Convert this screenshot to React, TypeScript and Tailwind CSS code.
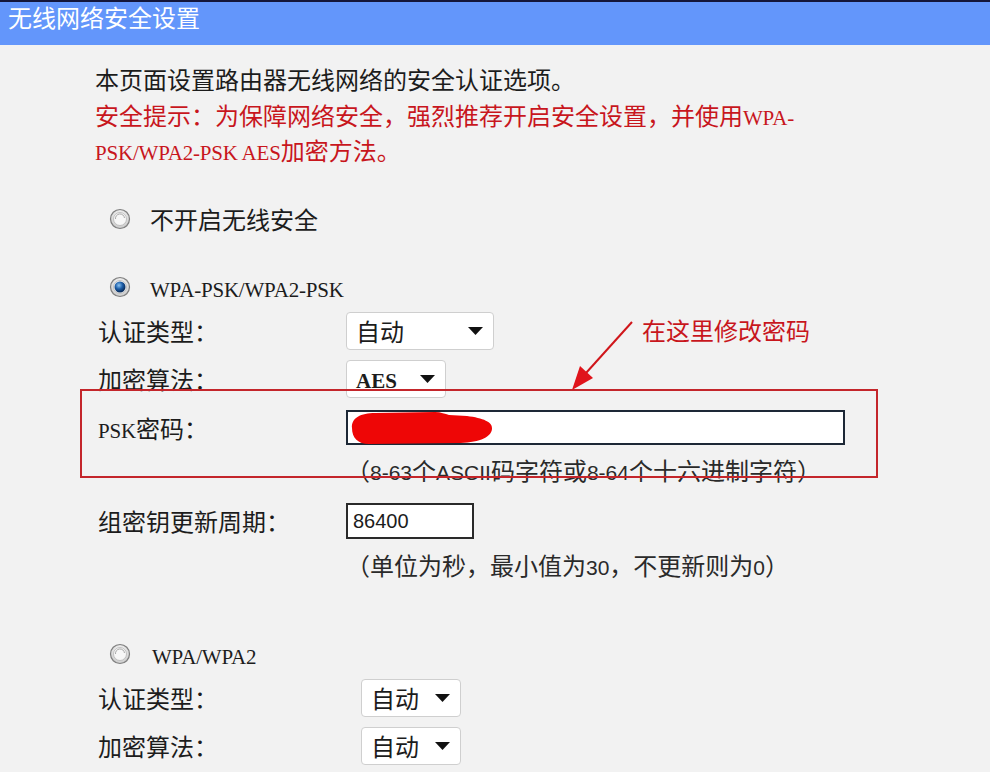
import React from 'react';

const RED = 'text-[#c8161d]';

// Latin text in the half-width serif look of the router page
const Mono: React.FC<{ children: React.ReactNode }> = ({ children }) => (
    <span className="font-['Liberation_Serif'] text-[21px] tracking-[-0.2px]">{children}</span>
);

const Sans: React.FC<{ children: React.ReactNode }> = ({ children }) => (
    <span className="font-['Liberation_Sans'] text-[21px]">{children}</span>
);

const Radio: React.FC<{ checked?: boolean }> = ({ checked }) => (
    <svg width="22" height="22" viewBox="0 0 22 22">
        <defs>
            <radialGradient id="ring" cx="50%" cy="35%" r="65%">
                <stop offset="0%" stopColor="#ffffff" />
                <stop offset="100%" stopColor="#c9c9c9" />
            </radialGradient>
            <radialGradient id="dot" cx="40%" cy="35%" r="60%">
                <stop offset="0%" stopColor="#8cc4f2" />
                <stop offset="55%" stopColor="#1d5ea8" />
                <stop offset="100%" stopColor="#0a2e5e" />
            </radialGradient>
        </defs>
        <circle cx="11" cy="11" r="9.5" fill="url(#ring)" stroke="#7f7f7f" strokeWidth="1.2" />
        <circle cx="11" cy="11" r="6.5" fill="#f7f7f7" stroke="#b5b5b5" strokeWidth="0.8" />
        {checked ? (
            <circle cx="11" cy="11" r="5.5" fill="url(#dot)" />
        ) : (
            <path d="M6.5 11 A4.5 4.5 0 0 1 15.5 10" fill="none" stroke="#a8a8a8" strokeWidth="1" />
        )}
    </svg>
);

const Select: React.FC<{ width: string; children: React.ReactNode }> = ({ width, children }) => (
    <div className={`${width} h-[38px] flex items-center justify-between bg-white border border-[#cfcfcf] rounded-[4px] pl-[9px] pr-[10px]`}>
        <span className="leading-[24px]">{children}</span>
        <svg width="15" height="8" viewBox="0 0 15 8"><path d="M0 0 H15 L7.5 8 Z" fill="#111" /></svg>
    </div>
);

const Row: React.FC<{ label: React.ReactNode; labelW: string; h: string; className?: string; children: React.ReactNode }> = ({ label, labelW, h, className, children }) => (
    <div className={`flex items-center ${h} pl-[98px] ${className ?? ''}`}>
        <div className={`${labelW} shrink-0 h-[24px] leading-[24px]`}>{label}</div>
        {children}
    </div>
);

export default function App() {
    return (
        <div className="relative w-[990px] h-[772px] overflow-hidden bg-[#f2f2f2] text-[24px] leading-[24px] text-[#1c1c1c] font-['Noto_Sans_CJK_SC',sans-serif]">
            {/* Header */}
            <div className="h-[45px] border-t-2 border-[#14163a] bg-[#6396fb] pl-[8px] pt-[3px]">
                <div className="h-[24px] text-white">无线网络安全设置</div>
            </div>

            {/* Intro */}
            <div className="h-[24px] pl-[95px] mt-[22px]">本页面设置路由器无线网络的安全认证选项。</div>
            <div className={`pl-[95px] mt-[6px] ${RED}`}>
                <div className="h-[35px] leading-[35px]">安全提示：为保障网络安全，强烈推荐开启安全设置，并使用<Mono>WPA-</Mono></div>
                <div className="h-[35px] leading-[35px]"><Mono>PSK/WPA2-PSK AES</Mono>加密方法。</div>
            </div>

            {/* Option 1 */}
            <div className="flex items-center h-[40px] mt-[32px] pl-[109px] gap-[19px]">
                <Radio />
                <span className="h-[24px]">不开启无线安全</span>
            </div>

            {/* Option 2 */}
            <div className="flex items-center h-[40px] mt-[28px] pl-[109px] gap-[19px]">
                <Radio checked />
                <span className="h-[24px]"><Mono>WPA-PSK/WPA2-PSK</Mono></span>
            </div>
            <Row label="认证类型：" labelW="w-[248px]" h="h-[38px]" className="mt-[5px]">
                <Select width="w-[148px]">自动</Select>
            </Row>
            <Row label="加密算法：" labelW="w-[248px]" h="h-[38px]" className="mt-[10px]">
                <Select width="w-[100px]"><span className="font-['Liberation_Serif'] text-[21px] font-bold">AES</span></Select>
            </Row>
            <Row label={<><Mono>PSK</Mono>密码：</>} labelW="w-[248px]" h="h-[35px]" className="mt-[12px]">
                <div className="relative w-[499px] h-[35px] bg-white border-2 border-[#1d2836]">
                    <svg className="absolute left-[1px] top-[-1px]" width="145" height="34" viewBox="0 0 145 34">
                        <path d="M3 17 C2 7 12 2 26 2 L86 1 C92 1 96 3 100 4 L118 5 C134 7 144 11 143 18 C142 27 128 32 108 32 L20 33 C9 33 3 27 3 17 Z" fill="#ee0606" />
                    </svg>
                </div>
            </Row>
            <div className="h-[24px] pl-[346px] mt-[13px] text-[#2a2a2a]">
                （<Sans>8-63</Sans>个<Sans>ASCII</Sans>码字符或<Sans>8-64</Sans>个十六进制字符）
            </div>
            <Row label="组密钥更新周期：" labelW="w-[248px]" h="h-[36px]" className="mt-[21px]">
                <div className="w-[128px] h-[36px] flex items-center bg-white border-2 border-[#2a2a2a] pl-[5px] font-['Liberation_Sans'] text-[20px]">86400</div>
            </Row>
            <div className="h-[24px] pl-[346px] mt-[14px] text-[#2a2a2a]">
                （单位为秒，最小值为<Sans>30</Sans>，不更新则为<Sans>0</Sans>）
            </div>

            {/* Option 3 */}
            <div className="flex items-center h-[40px] mt-[57px] pl-[109px] gap-[21px]">
                <Radio />
                <span className="h-[24px]"><Mono>WPA/WPA2</Mono></span>
            </div>
            <Row label="认证类型：" labelW="w-[263px]" h="h-[38px]" className="mt-[5px]">
                <Select width="w-[100px]">自动</Select>
            </Row>
            <Row label="加密算法：" labelW="w-[263px]" h="h-[38px]" className="mt-[10px]">
                <Select width="w-[100px]">自动</Select>
            </Row>

            {/* Annotation */}
            <div className="absolute left-[80px] top-[389px] w-[798px] h-[89px] border-2 border-[#c4262b]" />
            <svg className="absolute left-0 top-0 pointer-events-none" width="990" height="772">
                <line x1="632" y1="322" x2="586" y2="373" stroke="#d0161b" strokeWidth="2" />
                <path d="M572 390 L593 378 L580 366 Z" fill="#e0141b" />
            </svg>
            <div className={`absolute left-[642px] top-[318px] ${RED}`}>在这里修改密码</div>
        </div>
    );
}
